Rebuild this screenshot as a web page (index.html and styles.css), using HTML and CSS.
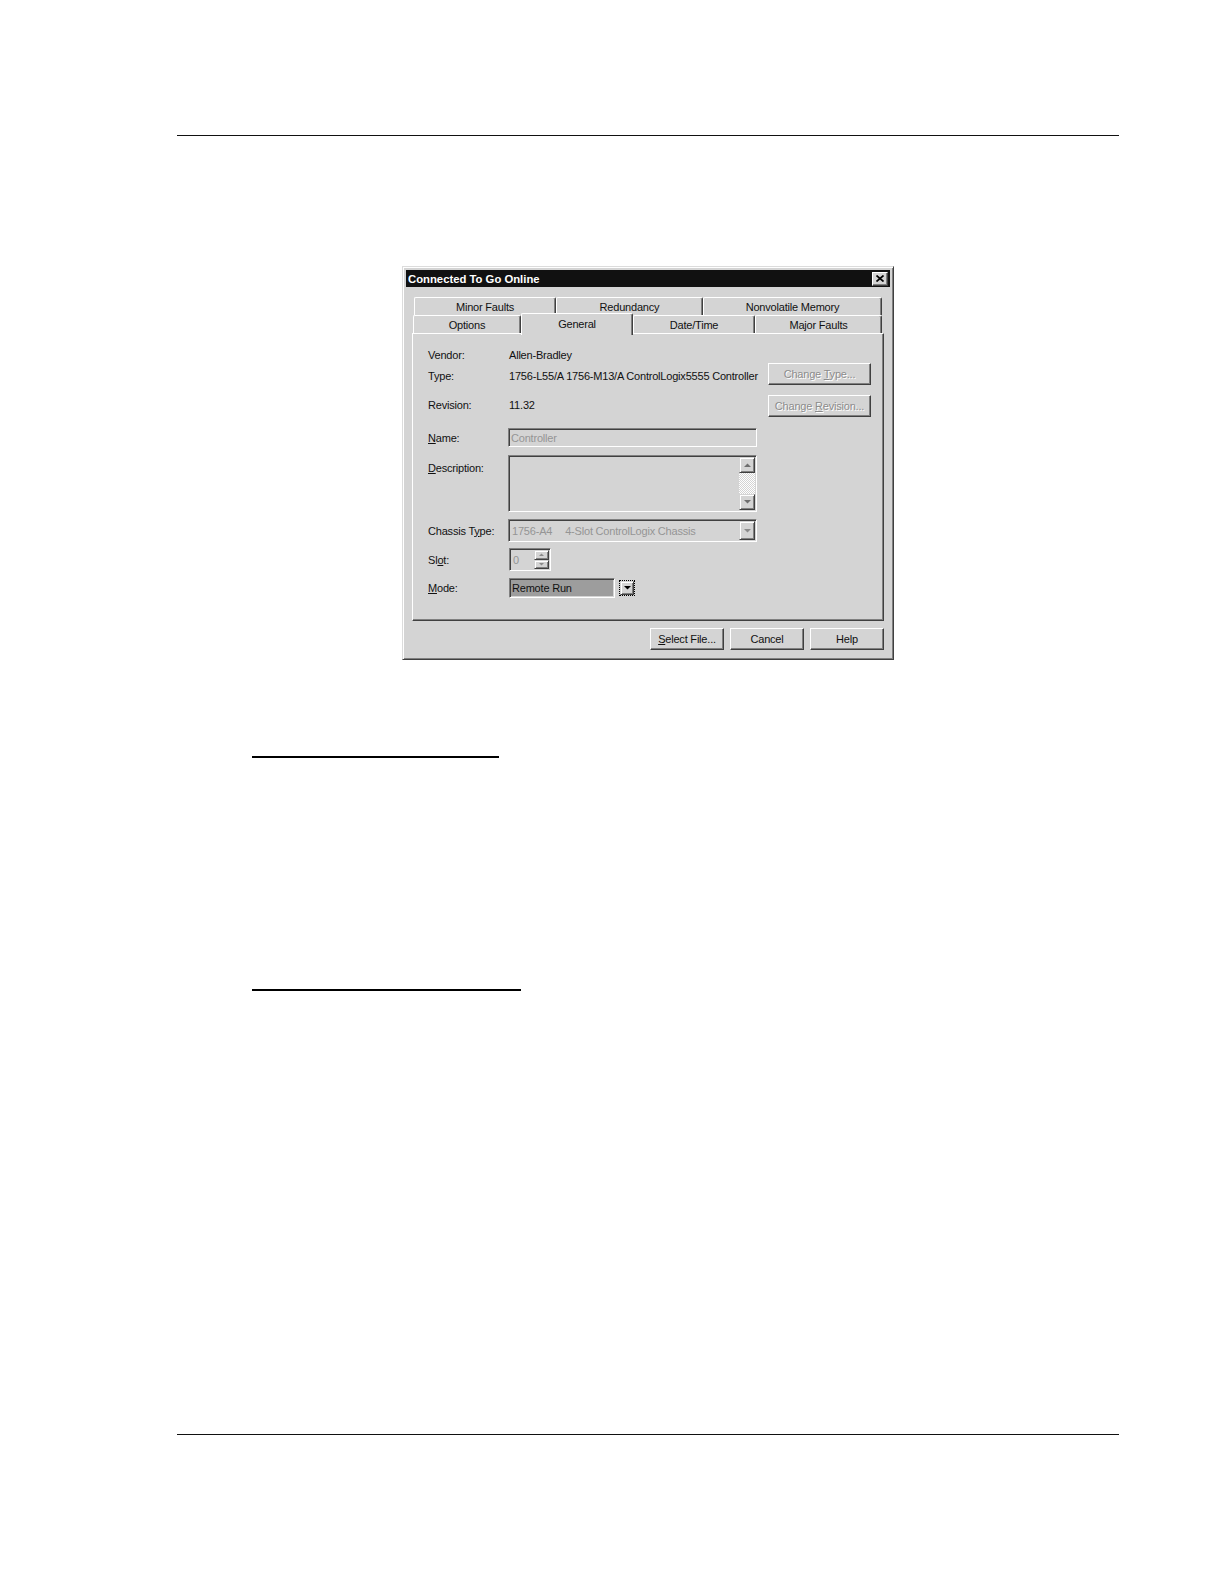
FILE: index.html
```html
<!DOCTYPE html>
<html>
<head>
<meta charset="utf-8">
<title>Connected To Go Online</title>
<link rel="stylesheet" href="styles.css">
</head>
<body>
<div class="page">
  <div class="rule"></div>

  <div class="dialog">
    <div class="titlebar">
      <span class="title">Connected To Go Online</span>
      <span class="close"><svg width="8" height="7" viewBox="0 0 8 7"><path d="M0.5 0.5L7.5 6.5M7.5 0.5L0.5 6.5" stroke="#000" stroke-width="1.7" fill="none"/></svg></span>
    </div>

    <div class="tabs">
      <div class="tabrow back">
        <div class="tab w-minor">Minor Faults</div>
        <div class="tab w-red">Redundancy</div>
        <div class="tab w-nv">Nonvolatile Memory</div>
      </div>
      <div class="tabrow front">
        <div class="tab w-opt">Options</div>
        <div class="tab sel w-gen">General</div>
        <div class="tab w-dt">Date/Time</div>
        <div class="tab w-mf">Major Faults</div>
      </div>
    </div>

    <div class="panel">
      <div class="form">
        <div class="row r-vendor"><span class="lbl">Vendor:</span><span class="val">Allen-Bradley</span></div>
        <div class="row r-type"><span class="lbl">Type:</span><span class="val">1756-L55/A 1756-M13/A ControlLogix5555 Controller</span></div>
        <div class="row r-rev"><span class="lbl">Revision:</span><span class="val">11.32</span></div>
        <div class="row r-name"><span class="lbl"><u>N</u>ame:</span><div class="field sunken name">Controller</div></div>
        <div class="row r-desc"><span class="lbl lbl-top"><u>D</u>escription:</span>
          <div class="sunken desc">
            <div class="scroll">
              <div class="sbtn"><svg width="7" height="4" viewBox="0 0 7 4"><path d="M0 4h7L3.5 0.5z" fill="#6e6e6e"/></svg></div>
              <div class="track"></div>
              <div class="sbtn"><svg width="7" height="4" viewBox="0 0 7 4"><path d="M0 0h7L3.5 3.5z" fill="#6e6e6e"/></svg></div>
            </div>
          </div>
        </div>
        <div class="row r-chassis"><span class="lbl">Chassis T<u>y</u>pe:</span>
          <div class="sunken combo">
            <span class="combo-text"><span>1756-A4</span><span class="gap">4-Slot ControlLogix Chassis</span></span>
            <div class="sbtn cbtn"><svg width="7" height="4" viewBox="0 0 7 4"><path d="M0 0h7L3.5 3.5z" fill="#8a8a8a"/></svg></div>
          </div>
        </div>
        <div class="row r-slot"><span class="lbl">Sl<u>o</u>t:</span>
          <div class="sunken spin">
            <span class="spin-text">0</span>
            <div class="spin-btns">
              <div class="sbtn mini"><svg width="5" height="3" viewBox="0 0 5 3"><path d="M0 3h5L2.5 0.5z" fill="#8a8a8a"/></svg></div>
              <div class="sbtn mini"><svg width="5" height="3" viewBox="0 0 5 3"><path d="M0 0h5L2.5 2.5z" fill="#8a8a8a"/></svg></div>
            </div>
          </div>
        </div>
        <div class="row r-mode"><span class="lbl"><u>M</u>ode:</span>
          <div class="sunken mode">Remote Run</div>
          <div class="focus"><div class="sbtn mbtn"><svg width="7" height="4" viewBox="0 0 7 4"><path d="M0 0h7L3.5 3.5z" fill="#000"/></svg></div></div>
        </div>
      </div>
      <div class="side">
        <div class="btn dis"><span>Change <u>T</u>ype...</span></div>
        <div class="btn dis"><span>Change <u>R</u>evision...</span></div>
      </div>
    </div>

    <div class="actions">
      <div class="btn act"><span><u>S</u>elect File...</span></div>
      <div class="btn act"><span>Cancel</span></div>
      <div class="btn act"><span>Help</span></div>
    </div>
  </div>

  <div class="uline u1"></div>
  <div class="uline u2"></div>
  <div class="rule rule-bottom"></div>
</div>
</body>
</html>
```

FILE: styles.css
```css
* { box-sizing: border-box; }
html, body { margin: 0; padding: 0; background: #fff; }
body { font-family: "Liberation Sans", Arial, sans-serif; color: #000; }

.page { width: 1224px; height: 1584px; padding-top: 135px; overflow: hidden; }

.rule { height: 1px; background: #111; margin-left: 177px; width: 942px; }
.rule-bottom { margin-top: 443px; }

.uline { height: 2px; background: #000; margin-left: 252px; }
.u1 { margin-top: 96px; width: 247px; }
.u2 { margin-top: 231px; width: 269px; }

/* dialog window */
.dialog {
  margin-top: 130px;
  margin-left: 402px;
  width: 492px;
  background: #d4d4d4;
  border: 1px solid;
  border-color: #dcdcdc #404040 #404040 #dcdcdc;
  box-shadow: inset 1px 1px #fff, inset -1px -1px #808080;
  padding: 3px;
  font-family: "Liberation Sans", Arial, sans-serif;
  font-size: 11px;
  letter-spacing: -0.2px;
  color: #111;
}

.titlebar {
  height: 17px;
  background: #111;
  display: flex;
  align-items: center;
  justify-content: space-between;
  padding: 0 2px;
}
.title { color: #fff; font-weight: bold; font-size: 11.3px; letter-spacing: 0; }
.close {
  width: 16px; height: 14px;
  background: #d4d4d4;
  border: 1px solid;
  border-color: #fff #404040 #404040 #fff;
  box-shadow: inset -1px -1px #808080;
  display: flex; align-items: center; justify-content: center;
}

/* tabs */
.tabs { margin-top: 10px; }
.tabrow { display: flex; height: 18px; align-items: flex-start; }
.tabrow.back { margin-left: 8px; }
.tabrow.front { margin-left: 7px; }
.tab {
  height: 18px;
  display: flex; align-items: center; justify-content: center;
  background: #d4d4d4;
  border-top: 1px solid #fff;
  border-left: 1px solid #fff;
  border-right: 1px solid #404040;
  box-shadow: inset -1px 0 #808080;
  border-radius: 2px 2px 0 0;
}
.tab.sel {
  height: 22px;
  margin-top: -2px;
  margin-bottom: -2px;
  padding-bottom: 2px;
  position: relative;
  z-index: 1;
}
.w-minor { width: 142px; }
.w-red { width: 147px; }
.w-nv { width: 179px; }
.w-opt { width: 108px; }
.w-gen { width: 112px; }
.w-dt { width: 122px; }
.w-mf { width: 127px; }

/* panel */
.panel {
  margin: 0 6px;
  height: 288px;
  border: 1px solid;
  border-color: #fff #404040 #404040 #fff;
  box-shadow: inset -1px -1px #808080;
  padding: 11px 0 0 15px;
  display: flex;
  align-items: flex-start;
}
.form { width: 329px; display: flex; flex-direction: column; }
.side { margin-left: 11px; padding-top: 18px; width: 103px; display: flex; flex-direction: column; gap: 10px; }

.row { display: flex; align-items: center; }
.lbl { width: 80px; flex: none; }
.lbl-top { padding-top: 7px; }
.val { padding-left: 1px; white-space: nowrap; }

.r-vendor { height: 20px; }
.r-type { height: 21px; }
.r-rev { height: 20px; margin-top: 9px; }
.r-name { height: 19px; margin-top: 13px; }
.r-desc { height: 57px; margin-top: 8px; align-items: flex-start; }
.r-chassis { height: 23px; margin-top: 7px; }
.r-slot { height: 23px; margin-top: 6px; }
.r-mode { height: 20px; margin-top: 7px; }

.sunken {
  border: 1px solid;
  border-color: #808080 #fff #fff #808080;
  box-shadow: inset 1px 1px #404040, inset -1px -1px #d4d4d4;
}

.field { display: flex; align-items: center; }
.name { width: 249px; height: 19px; padding-left: 2px; color: #959595; }

.desc { width: 249px; height: 57px; padding: 1px; display: flex; justify-content: flex-end; }
.scroll { width: 16px; display: flex; flex-direction: column; }
.sbtn {
  background: #d4d4d4;
  border: 1px solid;
  border-color: #d4d4d4 #404040 #404040 #d4d4d4;
  box-shadow: inset 1px 1px #fff, inset -1px -1px #808080;
  display: flex; align-items: center; justify-content: center;
}
.scroll .sbtn { height: 16px; flex: none; }
.track {
  flex: 1;
  background: repeating-conic-gradient(#fff 0 25%, #d4d4d4 0 50%) 0 0 / 2px 2px;
}

.combo { width: 249px; height: 23px; padding: 1px; display: flex; align-items: stretch; }
.combo-text { flex: 1; display: flex; align-items: center; padding-left: 2px; color: #959595; white-space: nowrap; }
.combo-text .gap { margin-left: 13px; }
.cbtn { width: 16px; }

.spin { margin-left: 1px; width: 42px; height: 23px; padding: 1px; display: flex; }
.spin-text { flex: 1; display: flex; align-items: center; padding-left: 2px; color: #959595; }
.spin-btns { width: 15px; display: flex; flex-direction: column; }
.mini { flex: 1; }

.mode {
  margin-left: 1px;
  width: 106px; height: 20px;
  background: #9d9d9d;
  display: flex; align-items: center;
  padding-left: 2px;
  color: #111;
}
.focus { margin-left: 4px; border: 1px dotted #000; padding: 0; display: flex; }
.mbtn { width: 14px; height: 14px; }

/* buttons */
.btn {
  height: 22px;
  display: flex; align-items: center; justify-content: center;
  background: #d4d4d4;
  border: 1px solid;
  border-color: #fff #404040 #404040 #fff;
  box-shadow: inset -1px -1px #808080;
  white-space: nowrap;
}
.btn.dis { color: #8c8c8c; text-shadow: 1px 1px 0 #fff; }

.actions { display: flex; justify-content: flex-end; gap: 6px; margin: 7px 6px 6px 0; }
.act { width: 74px; }
```
